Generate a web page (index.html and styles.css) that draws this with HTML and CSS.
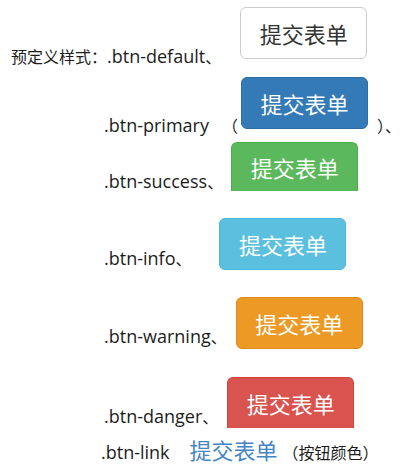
FILE: index.html
```html
<!DOCTYPE html>
<html lang="zh">
<head>
<meta charset="utf-8">
<title>按钮颜色</title>
<link rel="stylesheet" href="styles.css">
</head>
<body>
<div class="page">
  <div class="row row-1">
    <span class="label"><span class="zh">预定义样式：</span>.btn-default<span class="zh">、</span></span>
    <span class="btn btn-default">提交表单</span>
  </div>
  <div class="row row-2">
    <span class="label">.btn-primary<span class="zh paren">（</span></span>
    <span class="btn btn-primary">提交表单</span>
    <span class="label tail"><span class="zh">）、</span></span>
  </div>
  <div class="row row-3">
    <span class="label">.btn-success<span class="zh">、</span></span>
    <span class="btn btn-success">提交表单</span>
  </div>
  <div class="row row-4">
    <span class="label">.btn-info<span class="zh">、</span></span>
    <span class="btn btn-info">提交表单</span>
  </div>
  <div class="row row-5">
    <span class="label">.btn-warning<span class="zh">、</span></span>
    <span class="btn btn-warning">提交表单</span>
  </div>
  <div class="row row-6">
    <span class="label">.btn-danger<span class="zh">、</span></span>
    <span class="btn btn-danger">提交表单</span>
  </div>
  <div class="row row-7">
    <span class="label">.btn-link</span>
    <span class="btn-link">提交表单</span>
    <span class="label note"><span class="zh">（按钮颜色）</span></span>
  </div>
</div>
</body>
</html>
```
FILE: styles.css
```css
html, body {
  margin: 0;
  padding: 0;
  background: #ffffff;
}

.page {
  display: flex;
  flex-direction: column;
  width: 404px;
  overflow: hidden;
  font-family: "Open Sans", "Noto Sans CJK SC", sans-serif;
  color: #1c1c1c;
}

.row {
  display: flex;
  align-items: flex-start;
  flex-shrink: 0;
  white-space: nowrap;
  padding-left: 104px;
}

.label {
  display: block;
  flex-shrink: 0;
  font-size: 18px;
  line-height: 20px;
}

.zh {
  font-family: "Noto Sans CJK SC", sans-serif;
  font-size: 16px;
}

.paren {
  margin-left: 13px;
}

.btn {
  display: flex;
  align-items: center;
  justify-content: center;
  flex-shrink: 0;
  box-sizing: border-box;
  width: 127px;
  height: 52px;
  border: 1px solid transparent;
  border-radius: 6px;
  font-family: "Noto Sans CJK SC", sans-serif;
  font-size: 22px;
  line-height: 1;
  color: #ffffff;
}

.btn-default {
  background: #ffffff;
  border-color: #cccccc;
  color: #333333;
}

.btn-primary {
  background: #337ab7;
  border-color: #2e6da4;
}

.btn-success {
  background: #5cb85c;
  border-color: #4cae4c;
  border-bottom: 0;
  border-radius: 6px 6px 0 0;
  height: 49px;
}

.btn-info {
  background: #5bc0de;
  border-color: #46b8da;
}

.btn-warning {
  background: #ec9a25;
  border-color: #dd8a18;
}

.btn-danger {
  background: #d9534f;
  border-color: #d43f3a;
  border-bottom: 0;
  border-radius: 6px 6px 0 0;
  height: 51px;
}

.btn-link {
  display: block;
  flex-shrink: 0;
  font-family: "Noto Sans CJK SC", sans-serif;
  font-size: 22px;
  line-height: 26px;
  color: #4385c5;
}

/* row 1 */
.row-1 { height: 70px; padding-left: 11px; }
.row-1 .label { margin-top: 46px; }
.row-1 .btn { margin-top: 7px; margin-left: 19px; }

/* row 2 */
.row-2 { height: 68px; }
.row-2 .label { margin-top: 45px; }
.row-2 .btn { margin-top: 7px; margin-left: 3px; }
.row-2 .tail { margin-left: 9px; }

/* row 3 */
.row-3 { height: 72px; }
.row-3 .label { margin-top: 33px; }
.row-3 .btn { margin-top: 4px; margin-left: 8px; }

/* row 4 */
.row-4 { height: 80px; }
.row-4 .label { margin-top: 38px; }
.row-4 .btn { margin-top: 8px; margin-left: 28px; }

/* row 5 */
.row-5 { height: 80px; }
.row-5 .label { margin-top: 36px; }
.row-5 .btn { margin-top: 7px; margin-left: 9px; }

/* row 6 */
.row-6 { height: 65px; }
.row-6 .label { margin-top: 36px; }
.row-6 .btn { margin-top: 7px; margin-left: 9px; }

/* row 7 */
.row-7 { height: 35px; padding-left: 101px; align-items: baseline; }
.row-7 .label { margin-top: 7px; }
.row-7 .btn-link { margin-left: 20px; }
.row-7 .note { margin-left: 5px; }
```
